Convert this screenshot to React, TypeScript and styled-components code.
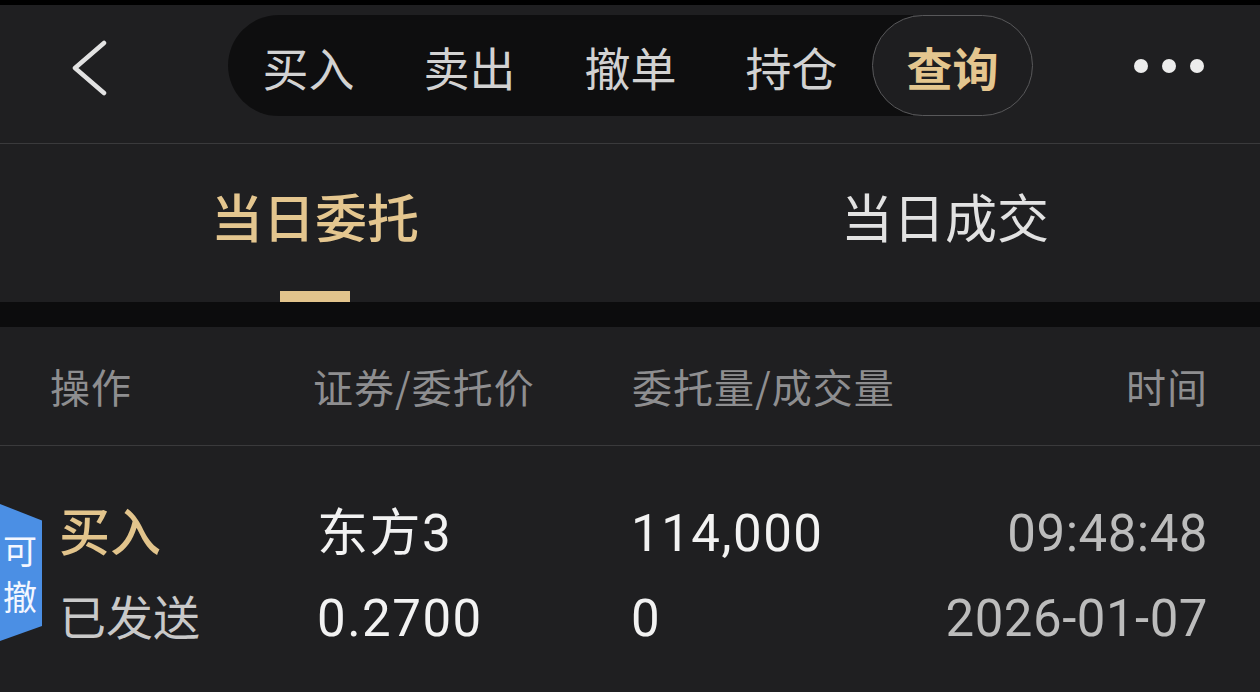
import styled, { createGlobalStyle } from "styled-components";

const GlobalStyle = createGlobalStyle`
  html, body {
    margin: 0;
    padding: 0;
    background: #1f1f21;
  }
  body {
    font-family: "Noto Sans CJK SC", "Noto Sans", sans-serif;
    -webkit-font-smoothing: antialiased;
  }
`;

const tradeTabs = ["买入", "卖出", "撤单", "持仓", "查询"];
const activeTrade = 4;

const orders = [
  {
    side: "买入",
    status: "已发送",
    name: "东方3",
    price: "0.2700",
    qty: "114,000",
    filled: "0",
    time: "09:48:48",
    date: "2026-01-07",
    cancelable: true,
  },
];

function App() {
  return (
    <Page>
      <GlobalStyle />
      <TopStrip />
      <Header>
        <BackButton>
          <svg width="40" height="56" viewBox="0 0 40 56">
            <polyline
              points="34,3 5,28 34,53"
              fill="none"
              stroke="#e2e2e2"
              strokeWidth="4.5"
              strokeLinecap="round"
              strokeLinejoin="round"
            />
          </svg>
        </BackButton>
        <Segment>
          {tradeTabs.map((t, i) => (
            <SegmentItem key={t} $active={i === activeTrade}>
              {t}
            </SegmentItem>
          ))}
        </Segment>
        <MoreDots>
          <Dot />
          <Dot />
          <Dot />
        </MoreDots>
      </Header>

      <SubTabs>
        <SubTab $active>
          <SubLabel $active>当日委托</SubLabel>
          <Indicator />
        </SubTab>
        <SubTab>
          <SubLabel>当日成交</SubLabel>
        </SubTab>
      </SubTabs>
      <Band />

      <TableHead>
        <HeadCell>操作</HeadCell>
        <HeadCell>证券/委托价</HeadCell>
        <HeadCell>委托量/成交量</HeadCell>
        <HeadCell $right>时间</HeadCell>
      </TableHead>

      {orders.map((o) => (
        <OrderRow key={o.time}>
          {o.cancelable && (
            <CancelTag>
              <span>可</span>
              <span>撤</span>
            </CancelTag>
          )}
          <Cell>
            <SideText>{o.side}</SideText>
            <StatusText>{o.status}</StatusText>
          </Cell>
          <Cell>
            <ValueText>{o.name}</ValueText>
            <ValueText>{o.price}</ValueText>
          </Cell>
          <Cell>
            <ValueText>{o.qty}</ValueText>
            <ValueText>{o.filled}</ValueText>
          </Cell>
          <Cell $right>
            <TimeText>{o.time}</TimeText>
            <TimeText>{o.date}</TimeText>
          </Cell>
        </OrderRow>
      ))}
    </Page>
  );
}

const Page = styled.div`
  width: 1260px;
  height: 692px;
  overflow: hidden;
  background: #1f1f21;
  display: flex;
  flex-direction: column;
`;

const TopStrip = styled.div`
  height: 5px;
  background: #000;
`;

const Header = styled.div`
  display: flex;
  align-items: center;
  height: 101px;
  padding: 10px 56px 27px 70px;
  border-bottom: 1px solid #3a3a3c;
`;

const BackButton = styled.div`
  width: 40px;
  height: 56px;
  display: flex;
  align-items: center;
  margin-top: 4px;
`;

const Segment = styled.div`
  margin-left: 118px;
  display: flex;
  height: 101px;
  border-radius: 51px 0 0 51px;
  background: linear-gradient(
    to right,
    #0e0e0f calc(100% - 120px),
    transparent calc(100% - 120px)
  );
`;

const SegmentItem = styled.div<{ $active?: boolean }>`
  width: 161px;
  box-sizing: border-box;
  display: flex;
  align-items: center;
  justify-content: center;
  font-size: 46px;
  color: ${(p) => (p.$active ? "#e4c68f" : "#d2d2d2")};
  font-weight: ${(p) => (p.$active ? 700 : 400)};
  border-radius: 51px;
  border: 1px solid ${(p) => (p.$active ? "#58585a" : "transparent")};
  background: ${(p) => (p.$active ? "#1e1e20" : "transparent")};
`;

const MoreDots = styled.div`
  margin-left: auto;
  display: flex;
  gap: 14px;
`;

const Dot = styled.span`
  width: 14px;
  height: 14px;
  border-radius: 50%;
  background: #ececec;
`;

const SubTabs = styled.div`
  display: flex;
  height: 158px;
`;

const SubTab = styled.div<{ $active?: boolean }>`
  flex: 1;
  display: flex;
  flex-direction: column;
  align-items: center;
  padding-top: 42px;
`;

const SubLabel = styled.div<{ $active?: boolean }>`
  font-size: 52px;
  line-height: 60px;
  color: ${(p) => (p.$active ? "#e4c68f" : "#e2e2e2")};
  font-weight: ${(p) => (p.$active ? 500 : 400)};
`;

const Indicator = styled.div`
  margin-top: auto;
  width: 70px;
  height: 11px;
  background: #e2c48c;
`;

const Band = styled.div`
  height: 25px;
  background: #0c0c0d;
`;

const TableHead = styled.div`
  display: grid;
  grid-template-columns: 263px 319px 1fr auto;
  align-items: center;
  height: 118px;
  padding: 0 52px 0 50px;
  border-bottom: 1px solid #3a3a3c;
`;

const HeadCell = styled.div<{ $right?: boolean }>`
  font-size: 40px;
  letter-spacing: 1px;
  color: #8e8e90;
  text-align: ${(p) => (p.$right ? "right" : "left")};
`;

const OrderRow = styled.div`
  position: relative;
  display: grid;
  grid-template-columns: 258px 314px 1fr auto;
  padding: 45px 52px 0 59px;
`;

const CancelTag = styled.div`
  position: absolute;
  left: 0;
  top: 58px;
  width: 42px;
  height: 137px;
  background: #4b8fe4;
  clip-path: polygon(0 0, 100% 12%, 100% 89%, 0 100%);
  display: flex;
  flex-direction: column;
  align-items: center;
  justify-content: center;
  gap: 6px;
  color: #f4f7ff;
  font-size: 34px;
  line-height: 40px;
  padding-right: 2px;
  box-sizing: border-box;
`;

const Cell = styled.div<{ $right?: boolean }>`
  display: flex;
  flex-direction: column;
  align-items: ${(p) => (p.$right ? "flex-end" : "flex-start")};
  font-family: Roboto, "Noto Sans CJK SC", sans-serif;
  font-size: 51px;
  line-height: 85px;
`;

const SideText = styled.div`
  color: #e2c48c;
  font-weight: 500;
`;

const StatusText = styled.div`
  color: #c9c9c9;
  font-size: 47px;
`;

const ValueText = styled.div`
  color: #f2f2f2;
  letter-spacing: 1.5px;
`;

const TimeText = styled.div`
  color: #bcbcbc;
  letter-spacing: 0.5px;
`;

export default App;
